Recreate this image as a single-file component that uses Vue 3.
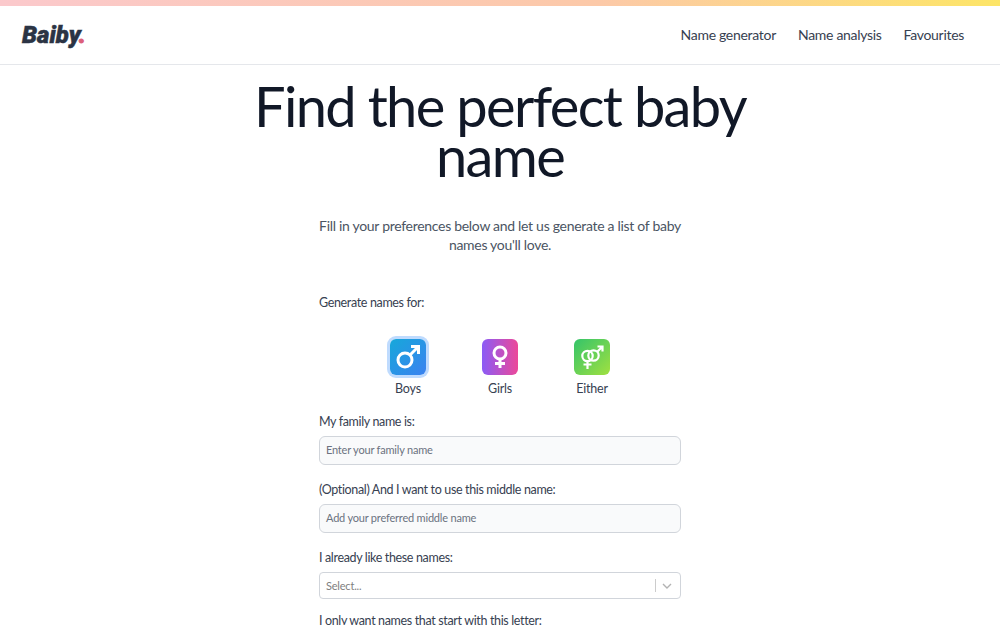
<template>
  <div class="page">
    <div class="rainbow"></div>
    <header class="topbar">
      <div class="logo">Baiby<span class="dot">.</span></div>
      <nav class="nav">
        <a v-for="link in links" :key="link">{{ link }}</a>
      </nav>
    </header>
    <main class="content">
      <h1>Find the perfect baby name</h1>
      <p class="lead">Fill in your preferences below and let us generate a list of baby names you'll love.</p>
      <form class="form">
        <label class="first">Generate names for:</label>
        <div class="genders">
          <div v-for="g in genders" :key="g.name" class="gender">
            <div class="tile" :class="[g.cls, { selected: g.selected }]">
              <svg viewBox="0 0 36 36" width="36" height="36" fill="none" stroke="#fff" stroke-width="3">
                <template v-if="g.name === 'Boys'">
                  <circle cx="15" cy="21" r="7" />
                  <path d="M20 16 L28 8 M21 7.5 H28.5 V15" />
                </template>
                <template v-else-if="g.name === 'Girls'">
                  <circle cx="18" cy="14" r="6" />
                  <path d="M18 20 V29 M13 24.5 H23" />
                </template>
                <template v-else>
                  <circle cx="13.5" cy="17" r="5.2" stroke-width="2.2" />
                  <circle cx="19.5" cy="16.5" r="5.2" stroke-width="2.2" />
                  <path d="M23.5 12.5 L28 8 M23.5 7.5 H28.5 V12.5 M13.5 22 V30 M9.5 25.5 H17.5" stroke-width="2.2" />
                </template>
              </svg>
            </div>
            <span>{{ g.name }}</span>
          </div>
        </div>
        <label>My family name is:</label>
        <div class="input">Enter your family name</div>
        <label>(Optional) And I want to use this middle name:</label>
        <div class="input">Add your preferred middle name</div>
        <label>I already like these names:</label>
        <div class="select">
          <span class="placeholder">Select...</span>
          <span class="sep"></span>
          <svg class="chev" viewBox="0 0 12 12" width="12" height="12" fill="none" stroke="#b3b3b3" stroke-width="1.4">
            <path d="M2 4 L6 8 L10 4" />
          </svg>
        </div>
        <label class="last">I only want names that start with this letter:</label>
      </form>
    </main>
  </div>
</template>

<script setup>
const links = ['Name generator', 'Name analysis', 'Favourites']

const genders = [
  { name: 'Boys', cls: 'boys', selected: true },
  { name: 'Girls', cls: 'girls', selected: false },
  { name: 'Either', cls: 'either', selected: false },
]
</script>

<style>
html,
body {
  margin: 0;
  background: #fff;
  overflow: hidden;
}
</style>

<style scoped>
.page {
  height: 625px;
  overflow: hidden;
  font-family: Lato, sans-serif;
  color: #1f2937;
}

.rainbow {
  height: 6px;
  background: linear-gradient(90deg, #fbc9cc 0%, #fcc9a8 60%, #fde567 100%);
}

.topbar {
  height: 58px;
  display: flex;
  align-items: center;
  justify-content: space-between;
  padding: 0 36px 0 22px;
  border-bottom: 1px solid #e5e7eb;
}

.logo {
  font-family: Roboto, sans-serif;
  font-weight: 900;
  font-style: italic;
  font-size: 24px;
  -webkit-text-stroke: 0.5px #2b3444;
  color: #2b3444;
}

.dot {
  color: #dc5f7a;
  -webkit-text-stroke: 1px #dc5f7a;
}

.nav {
  display: flex;
  gap: 22px;
  margin-bottom: 2px;
  font-size: 14px;
  letter-spacing: -0.3px;
  color: #374151;
}

.content {
  display: flex;
  flex-direction: column;
  align-items: center;
}

h1 {
  width: 540px;
  margin: 16px 0 0;
  font-size: 56px;
  line-height: 50px;
  letter-spacing: -1.65px;
  font-weight: 400;
  text-align: center;
  color: #111827;
}

.lead {
  width: 366px;
  margin: 35px 0 0;
  font-size: 14px;
  line-height: 19px;
  letter-spacing: -0.3px;
  text-align: center;
  color: #4b5563;
}

.form {
  width: 362px;
  margin-top: 30px;
  display: flex;
  flex-direction: column;
}

label {
  font-size: 12.5px;
  line-height: 18px;
  letter-spacing: -0.35px;
  color: #374151;
  margin-top: 16px;
  margin-bottom: 5px;
}

label.first {
  margin-top: 10px;
  margin-bottom: 4px;
}

label.last {
  margin-top: 13px;
}

.genders {
  display: flex;
  justify-content: center;
  gap: 56px;
  margin-top: 23px;
}

.gender {
  width: 36px;
  display: flex;
  flex-direction: column;
  align-items: center;
  gap: 6px;
  font-size: 12.5px;
  line-height: 16px;
  letter-spacing: -0.2px;
  color: #374151;
}

.tile {
  width: 36px;
  height: 36px;
  border-radius: 6px;
}

.boys {
  background: linear-gradient(135deg, #16a8da, #3b82f0);
}

.selected {
  box-shadow: 0 0 0 3px #bfdbfe;
}

.girls {
  background: linear-gradient(90deg, #8b5cf6, #ec4899);
}

.either {
  background: linear-gradient(135deg, #34c46a, #a0e040);
}

.input {
  height: 27px;
  line-height: 26px;
  padding: 0 6px;
  border: 1px solid #d1d5db;
  border-radius: 6px;
  background: #f9fafb;
  font-size: 11px;
  letter-spacing: -0.2px;
  color: #6b7280;
}

.select {
  height: 25px;
  display: flex;
  align-items: center;
  padding: 0 6px;
  border: 1px solid #d1d5db;
  border-radius: 4px;
  background: #fff;
  font-size: 11px;
  letter-spacing: -0.2px;
  color: #808080;
}

.placeholder {
  flex: 1;
  margin-top: -1px;
}

.sep {
  width: 1px;
  height: 13px;
  background: #ccc;
  margin-right: 5px;
}

.chev {
  margin-right: 1px;
}

a {
  color: inherit;
}
</style>
